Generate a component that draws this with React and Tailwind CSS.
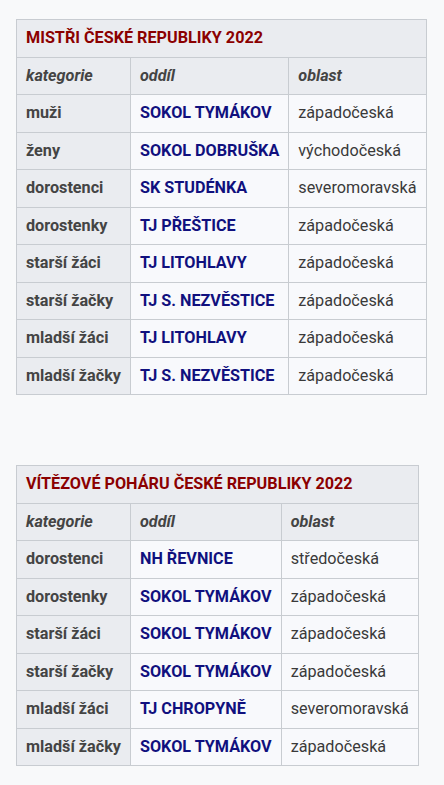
import React from "react";

const t1 = [
  ["muži", "SOKOL TYMÁKOV", "západočeská"],
  ["ženy", "SOKOL DOBRUŠKA", "východočeská"],
  ["dorostenci", "SK STUDÉNKA", "severomoravská"],
  ["dorostenky", "TJ PŘEŠTICE", "západočeská"],
  ["starší žáci", "TJ LITOHLAVY", "západočeská"],
  ["starší žačky", "TJ S. NEZVĚSTICE", "západočeská"],
  ["mladší žáci", "TJ LITOHLAVY", "západočeská"],
  ["mladší žačky", "TJ S. NEZVĚSTICE", "západočeská"],
];

const t2 = [
  ["dorostenci", "NH ŘEVNICE", "středočeská"],
  ["dorostenky", "SOKOL TYMÁKOV", "západočeská"],
  ["starší žáci", "SOKOL TYMÁKOV", "západočeská"],
  ["starší žačky", "SOKOL TYMÁKOV", "západočeská"],
  ["mladší žáci", "TJ CHROPYNĚ", "severomoravská"],
  ["mladší žačky", "SOKOL TYMÁKOV", "západočeská"],
];

function Table({ title, rows }) {
  const cell = "border border-[#c8ccd1] px-[9px] py-[6.25px] leading-6 text-left align-middle";
  return (
    <table className="border-collapse text-[16.2px] text-[#333]">
      <tbody>
        <tr>
          <th colSpan={3} className={cell + " bg-[#eaecf0] font-bold text-[#8b0000]"}>{title}</th>
        </tr>
        <tr>
          <th className={cell + " bg-[#eaecf0] font-bold italic text-[#444]"}>kategorie</th>
          <th className={cell + " bg-[#eaecf0] font-bold italic text-[#444]"}>oddíl</th>
          <th className={cell + " bg-[#eaecf0] font-bold italic text-[#444]"}>oblast</th>
        </tr>
        {rows.map((r, i) => (
          <tr key={i}>
            <td className={cell + " bg-[#eaecf0] font-bold text-[#444] whitespace-nowrap"}>{r[0]}</td>
            <td className={cell + " bg-[#f8f9fc] font-bold text-[#10107e] whitespace-nowrap"}>{r[1]}</td>
            <td className={cell + " bg-[#f8f9fc] text-[#3a3a3a] whitespace-nowrap"}>{r[2]}</td>
          </tr>
        ))}
      </tbody>
    </table>
  );
}

export default function App() {
  return (
    <div className="min-h-[785px] bg-[#f8f9fa] px-4 pt-[19px] pb-4" style={{ fontFamily: "Roboto, sans-serif" }}>
      <Table title="MISTŘI ČESKÉ REPUBLIKY 2022" rows={t1} />
      <div className="h-[70px]" />
      <Table title="VÍTĚZOVÉ POHÁRU ČESKÉ REPUBLIKY 2022" rows={t2} />
    </div>
  );
}
